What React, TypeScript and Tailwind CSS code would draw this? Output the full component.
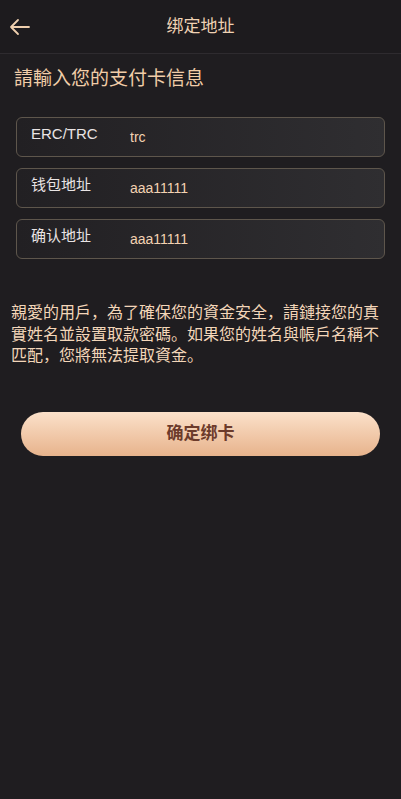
import React from "react";

const Field = ({ label, value }: { label: string; value: string }) => (
  <div className="flex h-[40px] items-start rounded-[6px] border border-[#5e564c] bg-gradient-to-r from-[#222023] to-[#2f2e31] pl-[14px]">
    <div className="w-[99px] pt-[6px] text-[15px] leading-[20px] text-[#e9e4e4]">{label}</div>
    <div className="pt-[9px] text-[14px] leading-[20px] text-[#f3d2b2]">{value}</div>
  </div>
);

export default function App() {
  return (
    <div
      className="min-h-[799px] w-full bg-[#1f1d20]"
      style={{ fontFamily: '"Liberation Sans", "Noto Sans CJK SC", "Noto Sans CJK TC", sans-serif' }}
    >
      <div className="relative flex h-[54px] items-center justify-center border-b border-[#2e2b2f] bg-[#1d1b1e]">
        <svg
          className="absolute left-[9px] top-[17px]"
          width="22"
          height="20"
          viewBox="0 0 22 20"
          fill="none"
          stroke="#efcfae"
          strokeWidth="1.8"
          strokeLinecap="round"
          strokeLinejoin="round"
        >
          <path d="M20 10H2M9 3L2 10l7 7" />
        </svg>
        <div className="text-[17px] text-[#efd2b4]">绑定地址</div>
      </div>
      <div className="px-[14px] pt-[12px] text-[19px] leading-[26px] text-[#f1cda8]">請輸入您的支付卡信息</div>
      <div className="flex flex-col gap-[11px] px-[16px] pt-[25px]">
        <Field label="ERC/TRC" value="trc" />
        <Field label="钱包地址" value="aaa11111" />
        <Field label="确认地址" value="aaa11111" />
      </div>
      <div className="px-[11px] pt-[43px] text-[16px] leading-[21.5px] text-[#f3d6b9]">
        親愛的用戶，為了確保您的資金安全，請鏈接您的真實姓名並設置取款密碼。如果您的姓名與帳戶名稱不匹配，您將無法提取資金。
      </div>
      <div className="px-[21px] pt-[45px]">
        <div className="flex h-[44px] items-center justify-center rounded-full bg-gradient-to-b from-[#fbe1ca] to-[#e7b38c] text-[17px] font-bold text-[#6c3b2b]">
          确定绑卡
        </div>
      </div>
    </div>
  );
}
